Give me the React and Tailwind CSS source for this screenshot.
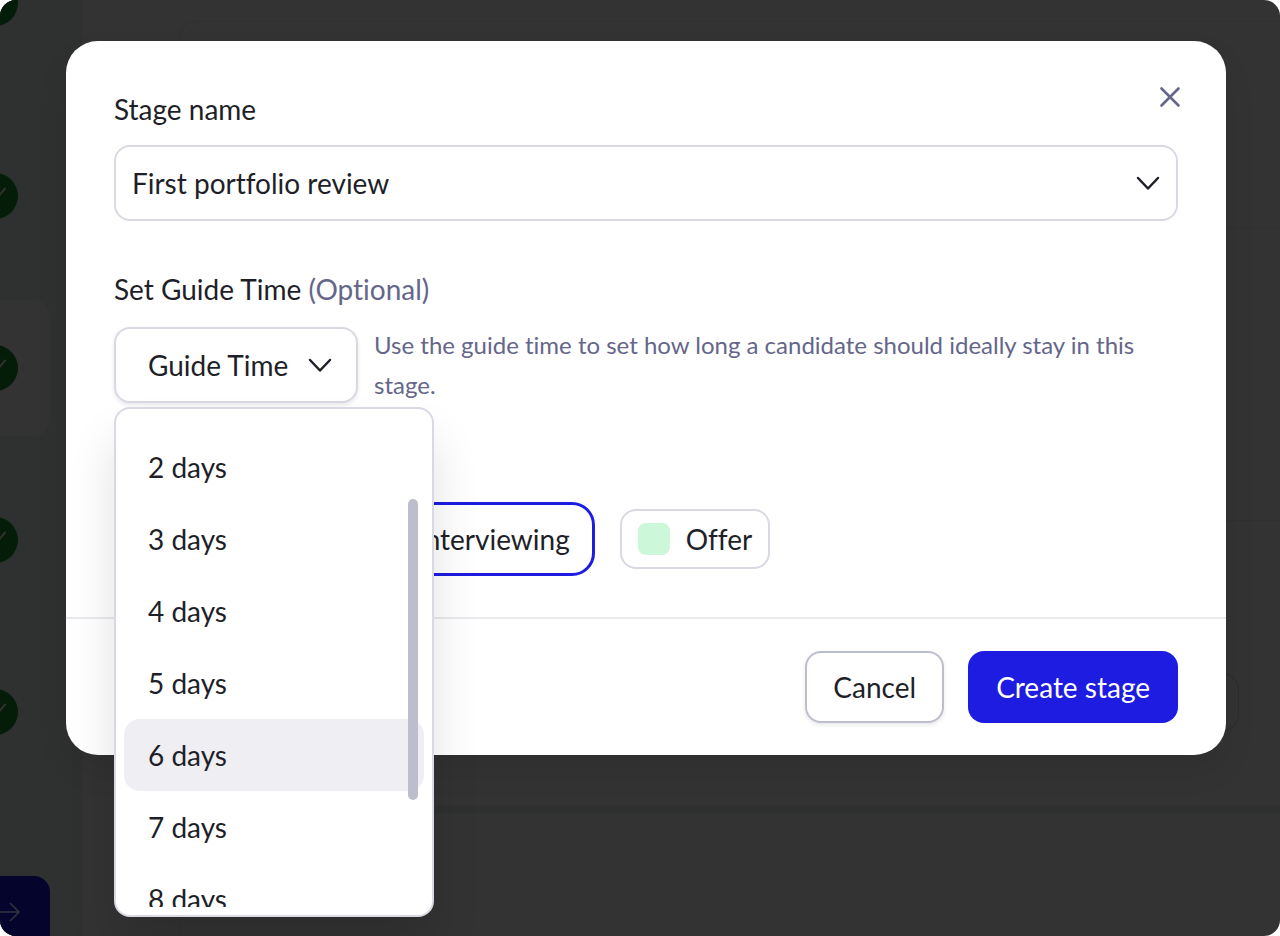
import { useState } from 'react'

const days = [2, 3, 4, 5, 6, 7, 8]

function Chevron({ className = '' }) {
  return (
    <svg viewBox="0 0 32 32" fill="none" className={`size-8 shrink-0 ${className}`} aria-hidden="true">
      <path d="M6 11L16 21.500L26 11" stroke="#1e1f29" strokeWidth="2.500" strokeLinecap="round" strokeLinejoin="round" />
    </svg>
  )
}

function CheckDot() {
  return (
    <span className="-ml-7 flex size-[46px] items-center justify-center rounded-full bg-[#041d09]">
      <svg viewBox="0 0 24 24" fill="none" className="size-6" aria-hidden="true">
        <path d="M4 13L10 19L22 4.500" stroke="#2f3130" strokeWidth="2" strokeLinecap="round" />
      </svg>
    </span>
  )
}

function Sidebar() {
  return (
    <aside className="flex w-[82px] shrink-0 flex-col overflow-hidden bg-[#2f3130]">
      <div className="-mt-5 flex h-[148px] items-start">
        <CheckDot />
      </div>
      <div className="flex h-[136px] items-center">
        <CheckDot />
      </div>
      <div className="mt-9 mr-8 flex h-[136px] items-center rounded-r-2xl bg-[#333333]">
        <CheckDot />
      </div>
      <div className="mt-9 flex h-[136px] items-center">
        <CheckDot />
      </div>
      <div className="mt-9 flex h-[136px] items-center">
        <CheckDot />
      </div>
      <button aria-label="Next" className="mt-auto mr-8 flex h-[60px] items-end rounded-tr-2xl bg-[#05042c] pb-3">
        <svg viewBox="0 0 24 24" fill="none" className="size-6" aria-hidden="true">
          <path d="M0 12H19M10.500 3.500L19 12L10.500 20.500" stroke="#33333c" strokeWidth="1.500" strokeLinecap="round" strokeLinejoin="round" />
        </svg>
      </button>
    </aside>
  )
}

function Board() {
  return (
    <main className="flex grow flex-col pt-[21px] pl-[97px]">
      <div className="h-[207px] rounded-tl-2xl border-t border-l border-[#2f3130]" />
      <div className="h-[292px] border-t border-l border-[#2f3130]" />
      <div className="h-[286px] border-t border-l border-[#2f3130] pt-[152px] pr-[41px]">
        <div className="h-[58px] rounded-2xl border border-[#292b2d]" />
      </div>
      <div className="grow border-t-8 border-l border-[#2f3130]" />
    </main>
  )
}

function DayMenu({ active, onPick }) {
  return (
    <div className="absolute top-full left-0 z-10 mt-1 w-80 rounded-2xl border-2 border-[#dad9e3] bg-white p-2 shadow-[0_32px_48px_rgba(0,0,0,0.12)]">
      <ul className="h-[490px] overflow-hidden pt-[14px]">
        {days.map((day) => (
          <li key={day}>
            <button
              onClick={() => onPick(day)}
              className={`flex h-[72px] w-full items-center rounded-2xl px-6 ${day === active ? 'bg-[#efeef3]' : 'bg-white'}`}
            >
              {day} days
            </button>
          </li>
        ))}
      </ul>
      <div className="absolute top-[90px] right-[14px] h-[301px] w-[10px] rounded-full bg-[#bdbecd]" />
    </div>
  )
}

function StageDialog() {
  const [active, setActive] = useState(6)
  const [open, setOpen] = useState(true)

  return (
    <div role="dialog" aria-label="Create stage" className="relative w-full rounded-[32px] bg-white shadow-[0_16px_32px_rgba(0,0,0,0.08)]">
      <button aria-label="Close" className="absolute top-10 right-10">
        <svg viewBox="0 0 32 32" fill="none" className="size-8" aria-hidden="true">
          <path d="M7.500 7.500L24.500 24.500M24.500 7.500L7.500 24.500" stroke="#65668a" strokeWidth="2.600" strokeLinecap="round" />
        </svg>
      </button>

      <div className="px-12 py-12">
        <label htmlFor="stage" className="mb-4 block w-fit">Stage name</label>
        <div className="relative">
          <select id="stage" className="h-[76px] w-full appearance-none rounded-2xl border-2 border-[#dad9e3] bg-white px-4 [font-variant-ligatures:none]">
            <option>First portfolio review</option>
          </select>
          <Chevron className="pointer-events-none absolute top-[22px] right-[14px]" />
        </div>

        <p className="mt-12 mb-4">
          Set Guide Time <span className="text-[#65668a]">(Optional)</span>
        </p>
        <div className="flex items-center gap-4">
          <div className="relative shrink-0">
            <button
              aria-expanded={open}
              onClick={() => setOpen(!open)}
              className="flex h-[76px] w-[244px] items-center justify-between rounded-2xl border-2 border-[#dad9e3] bg-white pr-5 pl-8 shadow-[0_2px_4px_rgba(30,31,60,0.1)]"
            >
              Guide Time
              <Chevron />
            </button>
            {open && <DayMenu active={active} onPick={setActive} />}
          </div>
          <p className="text-[24px] text-[#65668a]">
            Use the guide time to set how long a candidate should ideally stay in this stage.
          </p>
        </div>

        <div className="mt-[104px] flex gap-8 pl-[237px]">
          <button className="flex h-[60px] items-center gap-4 rounded-2xl px-[18px] outline-3 outline-offset-4 outline-[#1d1ce0]">
            <span className="size-8 rounded-lg bg-[#d5d9fb]" />
            Interviewing
          </button>
          <button className="flex h-[60px] items-center gap-4 rounded-2xl border-2 border-[#dad9e3] px-4">
            <span className="size-8 rounded-lg bg-[#cdf7d9]" />
            Offer
          </button>
        </div>
      </div>

      <div className="flex justify-end gap-6 border-t-2 border-[#e9e9ee] px-12 py-8">
        <button className="h-[72px] rounded-2xl border-2 border-[#bdbecd] bg-white px-[26px] shadow-[0_2px_4px_rgba(30,31,60,0.1)]">
          Cancel
        </button>
        <button className="h-[72px] rounded-2xl bg-[#1d1ce0] px-7 text-white">Create stage</button>
      </div>
    </div>
  )
}

function App() {
  return (
    <div className="bg-white font-['Lato',sans-serif] text-[28px] leading-10 text-[#1e1f29] [font-variant-ligatures:none]">
      <div className="relative flex min-h-screen overflow-hidden rounded-2xl bg-[#333333]">
        <Sidebar />
        <Board />
        <div className="absolute inset-0 pt-[41px] pr-[54px] pl-[66px]">
          <StageDialog />
        </div>
      </div>
    </div>
  )
}

export default App
